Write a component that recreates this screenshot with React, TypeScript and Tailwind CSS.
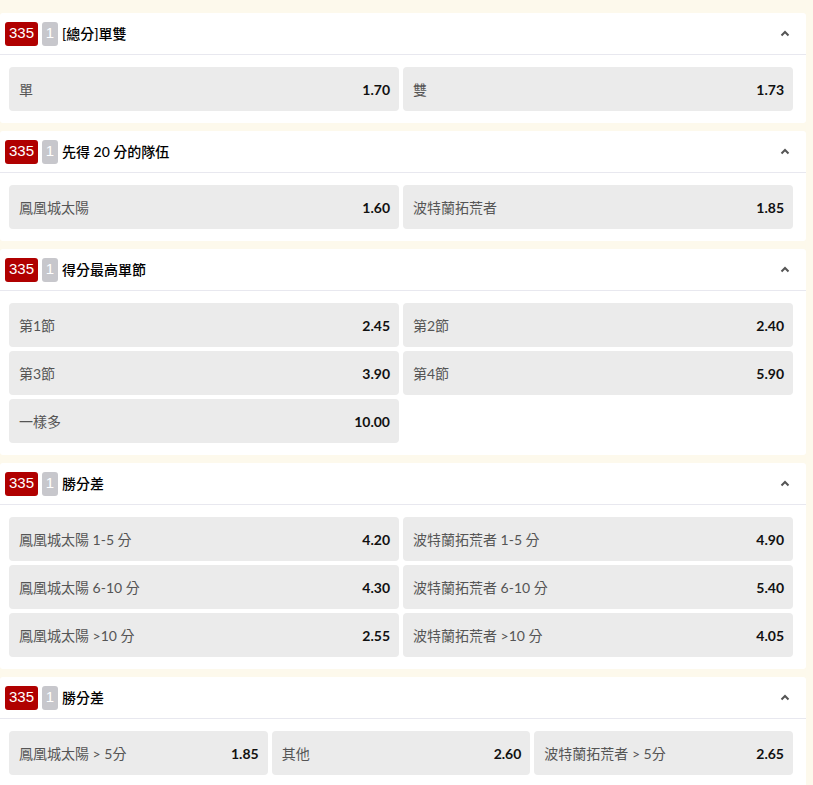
import { ReactNode } from 'react'

type Market = {
  title: string
  cols: number
  odds: [string, string][]
}

const markets: Market[] = [
  { title: '[總分]單雙', cols: 2, odds: [['單', '1.70'], ['雙', '1.73']] },
  { title: '先得 20 分的隊伍', cols: 2, odds: [['鳳凰城太陽', '1.60'], ['波特蘭拓荒者', '1.85']] },
  {
    title: '得分最高單節',
    cols: 2,
    odds: [['第1節', '2.45'], ['第2節', '2.40'], ['第3節', '3.90'], ['第4節', '5.90'], ['一樣多', '10.00']],
  },
  {
    title: '勝分差',
    cols: 2,
    odds: [
      ['鳳凰城太陽 1-5 分', '4.20'],
      ['波特蘭拓荒者 1-5 分', '4.90'],
      ['鳳凰城太陽 6-10 分', '4.30'],
      ['波特蘭拓荒者 6-10 分', '5.40'],
      ['鳳凰城太陽 >10 分', '2.55'],
      ['波特蘭拓荒者 >10 分', '4.05'],
    ],
  },
  {
    title: '勝分差',
    cols: 3,
    odds: [['鳳凰城太陽 > 5分', '1.85'], ['其他', '2.60'], ['波特蘭拓荒者 > 5分', '2.65']],
  },
]

function Badge({ children, className }: { children: ReactNode; className: string }) {
  return (
    <span
      className={`flex h-[24px] items-center justify-center rounded-[3px] text-[15px] text-white font-['Liberation_Sans',Arial,sans-serif] ${className}`}
    >
      {children}
    </span>
  )
}

function OddButton({ label, price }: { label: string; price: string }) {
  return (
    <button className="flex h-[44px] items-center justify-between rounded-[4px] bg-[#ebebeb] pl-[10px] pr-[9px] text-[14px]">
      <span className="text-[#555]">{label}</span>
      <span className="font-bold text-[#111]">{price}</span>
    </button>
  )
}

function MarketPanel({ market }: { market: Market }) {
  return (
    <div className="mb-[8px] rounded-[3px] bg-white">
      <div className="flex h-[42px] items-center border-b border-[#e8e8ef] pl-[5px] pr-[16px]">
        <Badge className="w-[33px] bg-[#b00000]">335</Badge>
        <Badge className="ml-[4px] w-[16px] bg-[#c7c7cc]">1</Badge>
        <span className="ml-[4px] text-[14px] font-medium text-black">{market.title}</span>
        <svg className="ml-auto" width="10" height="7" viewBox="0 0 10 7">
          <polyline points="1.5,5.5 5,2 8.5,5.5" fill="none" stroke="#555" strokeWidth="2" />
        </svg>
      </div>
      <div
        className={`grid gap-[4px] pb-[12px] pl-[9px] pr-[13px] pt-[12px] ${
          market.cols === 3 ? 'grid-cols-3' : 'grid-cols-2'
        }`}
      >
        {market.odds.map(([label, price], i) => (
          <OddButton key={i} label={label} price={price} />
        ))}
      </div>
    </div>
  )
}

export default function App() {
  return (
    <div className="min-h-screen bg-[#fdf9ec] pr-[7px] pt-[13px] font-['Lato','Noto_Sans_CJK_TC',sans-serif]">
      {markets.map((m, i) => (
        <MarketPanel key={i} market={m} />
      ))}
    </div>
  )
}
